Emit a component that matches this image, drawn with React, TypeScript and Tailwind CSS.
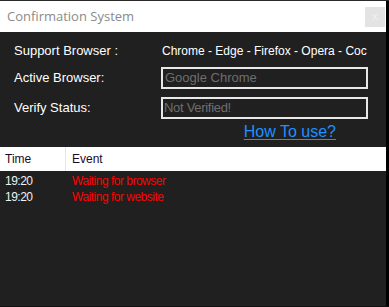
export default function App() {
  return (
    <div className="flex h-[307px] w-[389px] flex-col bg-black font-['Liberation_Sans',Arial,sans-serif]">
      <div className="h-px w-full bg-[#2a2a2a]" />
      <div className="flex h-[305px] w-[386px] flex-col bg-[#202020]">
        {/* Title bar */}
        <div className="flex h-[31px] items-center justify-between bg-white pl-[7px] pr-[1px]">
          <span className="font-['Open_Sans',sans-serif] text-[13px] text-[#8a8a8a]">Confirmation System</span>
          <div className="flex h-[20px] w-[20px] items-center justify-center bg-[#e3e3e3] text-[10px] text-[#f2f2f2]">x</div>
        </div>

        {/* Form */}
        <div className="flex flex-col pl-[14px] pr-[18px] pt-[10px] text-[13px] text-white">
          <div className="flex h-[18px] items-center">
            <span className="w-[148px]">Support Browser :</span>
            <span className="whitespace-nowrap text-[12px]">Chrome - Edge - Firefox - Opera - Coc</span>
          </div>
          <div className="mt-[7px] flex items-center">
            <span className="w-[147px]">Active Browser:</span>
            <div className="flex h-[22px] w-[207px] items-center border-2 border-[#e8e8e8] px-[2px] text-[13px] text-[#6e6e6e]">
              Google Chrome
            </div>
          </div>
          <div className="mt-[8px] flex items-center">
            <span className="w-[147px]">Verify Status:</span>
            <div className="flex h-[22px] w-[207px] items-center border-2 border-[#e8e8e8] px-[1px] text-[13px] tracking-[-0.3px] text-[#6e6e6e]">
              Not Verified!
            </div>
          </div>
          <div className="mt-[3px] flex justify-end pr-[32px]">
            <span className="text-[16px] leading-[20px] text-[#1e90ff] underline underline-offset-2">How To use?</span>
          </div>
        </div>

        {/* Log table */}
        <div className="mt-[5px] flex h-[24px] items-center bg-white text-[12px] text-[#1a0a2a]">
          <span className="w-[65px] pl-[5px]">Time</span>
          <span className="flex h-full items-center border-l border-[#e6e6e6] pl-[6px]">Event</span>
        </div>
        <div className="flex flex-col pt-[2px] text-[12px] tracking-[-0.5px]">
          <div className="flex h-[16px] items-center">
            <span className="w-[72px] pl-[5px] text-[#f0f0f0]">19:20</span>
            <span className="text-[#ff0000]">Waiting for browser</span>
          </div>
          <div className="flex h-[16px] items-center">
            <span className="w-[72px] pl-[5px] text-[#f0f0f0]">19:20</span>
            <span className="text-[#ff0000]">Waiting for website</span>
          </div>
        </div>
      </div>
      <div className="h-px w-full bg-[#111]" />
    </div>
  )
}
